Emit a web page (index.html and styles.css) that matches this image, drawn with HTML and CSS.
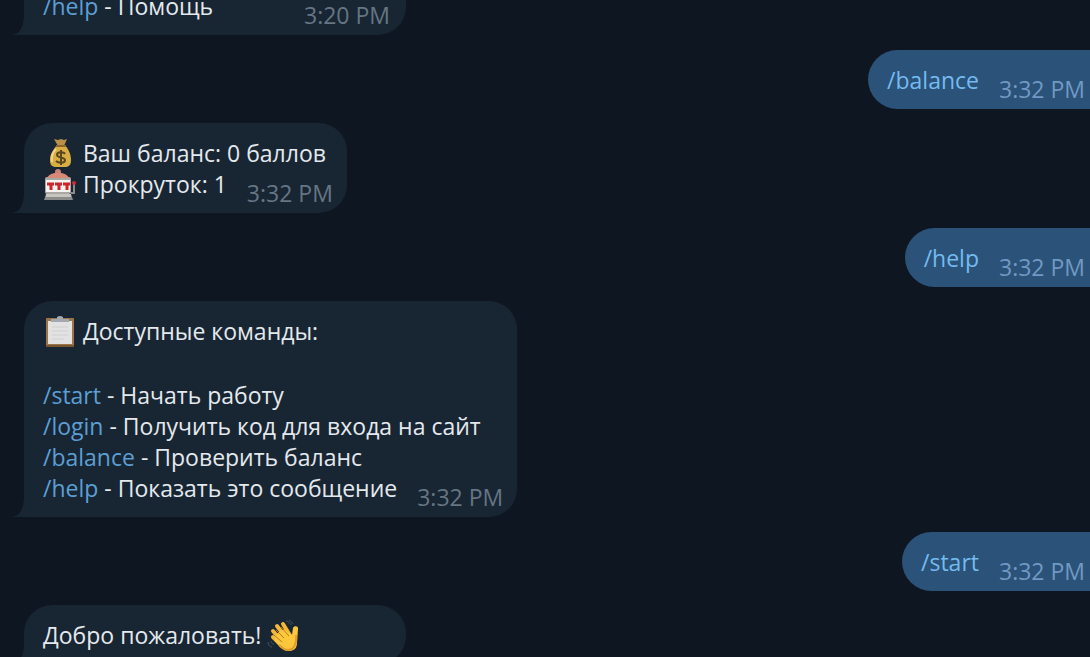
FILE: index.html
```html
<!DOCTYPE html>
<html lang="ru">
<head>
    <meta charset="UTF-8">
    <meta name="viewport" content="width=device-width, initial-scale=1.0">
    <title>Чат</title>
    <link rel="stylesheet" href="styles.css">
</head>
<body>

<main class="chat">
    <div class="message in wide first">
        <p class="last"><span><a href="#">/help</a> - Помощь</span><time>3:20 PM</time></p>
    </div>

    <div class="message out">
        <p class="last"><a href="#">/balance</a><time>3:32 PM</time></p>
    </div>

    <div class="message in">
        <p>
            <svg class="emoji" viewBox="0 0 34 32" aria-hidden="true">
                <path d="M11 1l4 1 3-1 3 1 3-1-3 7h-6z" fill="#b9904a"/>
                <path d="M14 7h8c3 4 6 8 6 15 0 6-3 7-6 7H13c-4 0-6-2-6-7 0-7 4-11 7-15z" fill="#d8ad43"/>
                <path d="M13 11c-3 3-5 7-4 13" fill="none" stroke="#f1d486" stroke-width="2"/>
                <path d="M13 8h10" stroke="#8b672d" stroke-width="2"/>
                <path d="M22 16c-1-2-8-3-8 1 0 3 8 2 8 5 0 4-7 3-9 1M18 12v15" fill="none" stroke="#57461f" stroke-width="2"/>
            </svg>
            Ваш баланс: 0 баллов
        </p>
        <p class="last">
            <span>
                <svg class="emoji" viewBox="0 0 34 32" aria-hidden="true">
                    <circle cx="15" cy="3" r="3" fill="#c98078"/>
                    <rect x="2" y="8" width="26" height="17" rx="2" fill="#a9a8a5"/>
                    <path d="M4 9c3-7 19-7 22 0z" fill="#d98a74"/>
                    <rect x="3" y="11" width="24" height="12" fill="#f5f2ef"/>
                    <path d="M4 15h7M12 15h7M20 15h7M8 15v6M16 15v6M24 15v6" stroke="#cf2428" stroke-width="3"/>
                    <path d="M3 25h25l2 6H1z" fill="#8b8b89"/>
                    <path d="M3 25h25v3H3z" fill="#c7c5c0"/>
                    <path d="M28 24h3v-9" fill="none" stroke="#8b8b89" stroke-width="2"/>
                    <circle cx="31" cy="14" r="2" fill="#cf2c3a"/>
                </svg>
                Прокруток: 1
            </span>
            <time>3:32 PM</time>
        </p>
    </div>

    <div class="message out">
        <p class="last"><a href="#">/help</a><time>3:32 PM</time></p>
    </div>

    <div class="message in">
        <p class="title">
            <svg class="emoji" viewBox="0 0 34 32" aria-hidden="true">
                <rect x="3" y="2" width="28" height="29" rx="1" fill="#9b7648"/>
                <path d="M5 5h24v23H5z" fill="#e2e2e2"/>
                <path d="M9 11h16M9 15h16M9 19h16M9 23h12" stroke="#d0d0d0" stroke-width="1"/>
                <path d="M8 6V3h6V1q3-2 6 0v2h6v3z" fill="#a2a9b1"/>
                <path d="M3 29h28v2H3z" fill="#765530"/>
            </svg>
            Доступные команды:
        </p>
        <p><a href="#">/start</a> - Начать работу</p>
        <p><a href="#">/login</a> - Получить код для входа на сайт</p>
        <p><a href="#">/balance</a> - Проверить баланс</p>
        <p class="last"><span><a href="#">/help</a> - Показать это сообщение</span><time>3:32 PM</time></p>
    </div>

    <div class="message out">
        <p class="last"><a href="#">/start</a><time>3:32 PM</time></p>
    </div>

    <div class="message in wide">
        <p>
            Добро пожаловать!
            <svg class="emoji" viewBox="0 0 34 32" aria-hidden="true">
                <path d="M10 6l10 13M16 4l8 13M6 11l11 13M6 17l9 9" fill="none" stroke="#f4b932" stroke-width="4" stroke-linecap="round"/>
                <path d="M8 16l4-4 5-3 8 6 1-7c1-3 6-2 5 1l-1 14c0 6-4 8-8 8-5 0-8-3-14-10z" fill="#fbc83d"/>
                <path d="M9 10l8 8M7 15l8 7M14 7l8 9" fill="none" stroke="#bd7c20" stroke-width="1"/>
                <path d="M29 15c1 10-3 15-8 15-3 0-6-2-9-5" fill="none" stroke="#e49b27" stroke-width="2"/>
                <path d="M19 1c2 0 4 2 5 4M22 0c2 1 3 2 4 4M1 22c0 3 2 5 4 5M4 21c0 2 1 3 3 3" fill="none" stroke="#48525d" stroke-width="1"/>
            </svg>
        </p>
    </div>
</main>

</body>
</html>
```
FILE: styles.css
```css
* {
    box-sizing: border-box;
}
body {
    margin: 0;
    height: 100vh;
    overflow: hidden;
    background: #0e1621;
    color: #e4e9ed;
    font-family: "Open Sans", "Noto Sans", sans-serif;
    font-size: 23px;
    line-height: 31px;
}
.chat {
    display: flex;
    flex-direction: column;
    margin-top: -24px;
    padding-left: 24px;
}
.message {
    position: relative;
    padding: 15px 14px 13px 19px;
    white-space: nowrap;
}
.message p {
    margin: 0;
}
.message a {
    color: #5c9fd3;
    text-decoration: none;
}
.message .title {
    margin-bottom: 33px;
}
.in {
    align-self: flex-start;
    margin-bottom: 15px;
    background: #182533;
    border-radius: 28px 28px 28px 0;
}
.in::before {
    content: "";
    position: absolute;
    left: -11px;
    bottom: 0;
    width: 11px;
    height: 17px;
    background: radial-gradient(11px 17px at 0 0, transparent 94%, #182533);
}
.first {
    border-radius: 0 0 28px 0;
}
.wide {
    width: 382px;
    padding-right: 16px;
}
.out {
    align-self: flex-end;
    margin-bottom: 14px;
    padding-right: 5px;
    background: #2b5278;
    border-radius: 30px 0 0 30px;
}
.message.out a {
    color: #74bbf0;
}
.last {
    display: flex;
    justify-content: space-between;
    gap: 20px;
}
time {
    position: relative;
    top: 9px;
    color: #657583;
}
.out time {
    color: #7199c4;
}
.emoji {
    width: 34px;
    height: 32px;
    margin: -6px 0 -2px;
    vertical-align: middle;
}
```
